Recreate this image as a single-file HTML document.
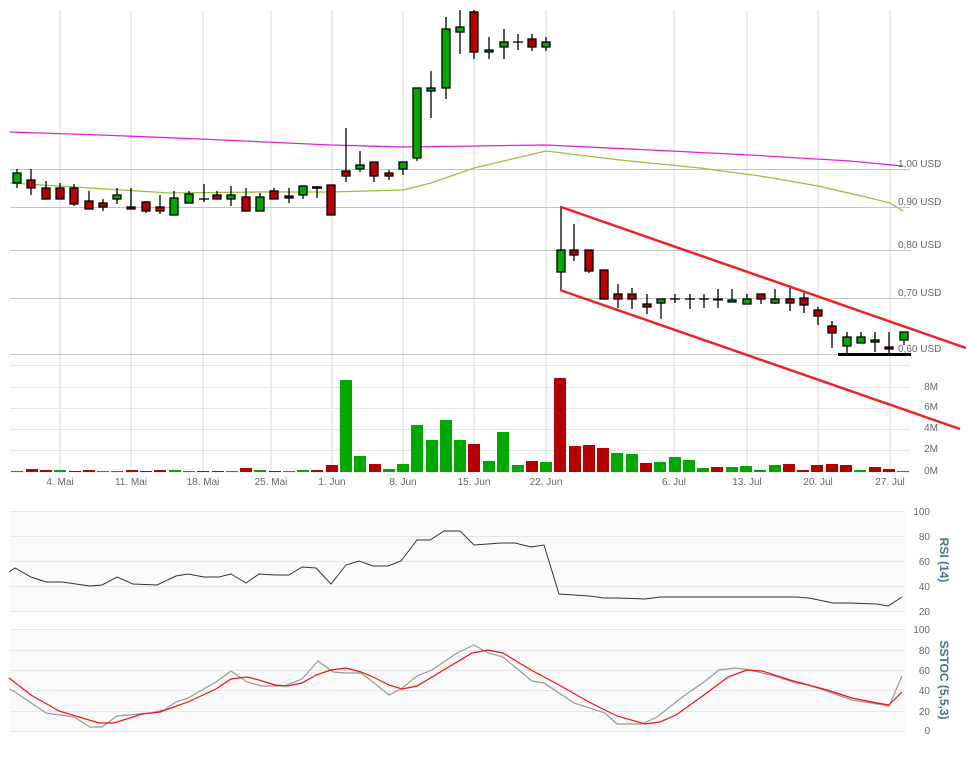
<!DOCTYPE html>
<html><head><meta charset="utf-8"><style>
html,body{margin:0;padding:0;background:#fff}
svg{display:block}
text{font-family:"Liberation Sans",sans-serif;font-size:10px;fill:#666}
</style></head><body>
<svg width="968" height="765" viewBox="0 0 968 765" xmlns="http://www.w3.org/2000/svg">
<!-- vertical grid -->
<g stroke="#ececec" stroke-width="2">
<line x1="60" y1="10" x2="60" y2="472"/><line x1="131" y1="10" x2="131" y2="472"/><line x1="203" y1="10" x2="203" y2="472"/><line x1="271" y1="10" x2="271" y2="472"/><line x1="332" y1="10" x2="332" y2="472"/><line x1="403" y1="10" x2="403" y2="472"/><line x1="474" y1="10" x2="474" y2="472"/><line x1="546" y1="10" x2="546" y2="472"/><line x1="674" y1="10" x2="674" y2="472"/><line x1="747" y1="10" x2="747" y2="472"/><line x1="818" y1="10" x2="818" y2="472"/><line x1="890" y1="10" x2="890" y2="472"/>
</g>
<!-- price grid -->
<g stroke="#c4c4c4" stroke-width="1">
<line x1="10" y1="169.5" x2="910" y2="169.5"/><line x1="10" y1="207.5" x2="910" y2="207.5"/><line x1="10" y1="250.5" x2="910" y2="250.5"/><line x1="10" y1="298.5" x2="910" y2="298.5"/><line x1="10" y1="354.5" x2="910" y2="354.5"/>
</g>
<!-- volume grid -->
<g stroke="#e4e4e4" stroke-width="1">
<line x1="10" y1="365.5" x2="910" y2="365.5"/><line x1="10" y1="387.5" x2="910" y2="387.5"/><line x1="10" y1="408.5" x2="910" y2="408.5"/><line x1="10" y1="429.5" x2="910" y2="429.5"/><line x1="10" y1="450.5" x2="910" y2="450.5"/><line x1="10" y1="472" x2="910" y2="472"/>
</g>
<!-- MAs -->
<polyline fill="none" stroke="#dd22dd" stroke-width="1.3" points="10,132 100,135 200,139 331,145 403,147 546,145 650,150 750,155 850,161 903,166"/>
<polyline fill="none" stroke="#99c040" stroke-width="1.3" points="10,183 90,188 170,193 260,192 331,192 403,190 431,183 474,168 546,151 620,160 700,168 760,176 818,186 870,198 890,203 903,211"/>
<!-- candles -->
<g stroke="#000" stroke-width="1.3">
<line x1="17" y1="169" x2="17" y2="188"/><line x1="31" y1="169" x2="31" y2="195"/><line x1="46" y1="181" x2="46" y2="199"/><line x1="60" y1="183" x2="60" y2="199"/><line x1="74" y1="184" x2="74" y2="206"/><line x1="89" y1="191" x2="89" y2="209"/><line x1="103" y1="199" x2="103" y2="211"/><line x1="117" y1="188" x2="117" y2="204"/><line x1="131" y1="188" x2="131" y2="209"/><line x1="146" y1="201" x2="146" y2="213"/><line x1="160" y1="195" x2="160" y2="214"/><line x1="174" y1="191" x2="174" y2="215"/><line x1="189" y1="191" x2="189" y2="203"/><line x1="204" y1="184" x2="204" y2="202"/><line x1="217" y1="191" x2="217" y2="199"/><line x1="231" y1="186" x2="231" y2="206"/><line x1="246" y1="188" x2="246" y2="211"/><line x1="260" y1="193" x2="260" y2="211"/><line x1="274" y1="188" x2="274" y2="199"/><line x1="289" y1="188" x2="289" y2="203"/><line x1="303" y1="186" x2="303" y2="199"/><line x1="317" y1="186" x2="317" y2="198"/><line x1="346" y1="128" x2="346" y2="182"/><line x1="360" y1="151" x2="360" y2="172"/><line x1="374" y1="162" x2="374" y2="182"/><line x1="389" y1="170" x2="389" y2="180"/><line x1="403" y1="162" x2="403" y2="175"/><line x1="417" y1="88" x2="417" y2="161"/><line x1="431" y1="71" x2="431" y2="118"/><line x1="446" y1="17" x2="446" y2="99"/><line x1="460" y1="10" x2="460" y2="54"/><line x1="474" y1="10" x2="474" y2="59"/><line x1="489" y1="37" x2="489" y2="59"/><line x1="504" y1="29" x2="504" y2="59"/><line x1="518" y1="34" x2="518" y2="50"/><line x1="532" y1="34" x2="532" y2="51"/><line x1="546" y1="37" x2="546" y2="51"/>
<line x1="561" y1="206" x2="561" y2="290"/><line x1="574" y1="224" x2="574" y2="261"/><line x1="589" y1="250" x2="589" y2="273"/><line x1="618" y1="284" x2="618" y2="308"/><line x1="632" y1="288" x2="632" y2="309"/><line x1="647" y1="294" x2="647" y2="314"/><line x1="661" y1="299" x2="661" y2="319"/><line x1="675" y1="294" x2="675" y2="303"/><line x1="690" y1="294" x2="690" y2="309"/><line x1="704" y1="294" x2="704" y2="308"/><line x1="718" y1="289" x2="718" y2="308"/><line x1="732" y1="289" x2="732" y2="302"/><line x1="747" y1="294" x2="747" y2="304"/><line x1="761" y1="294" x2="761" y2="304"/><line x1="775" y1="289" x2="775" y2="304"/><line x1="790" y1="288" x2="790" y2="311"/><line x1="804" y1="293" x2="804" y2="313"/><line x1="818" y1="307" x2="818" y2="325"/><line x1="832" y1="321" x2="832" y2="348"/><line x1="847" y1="332" x2="847" y2="353"/><line x1="861" y1="332" x2="861" y2="343"/><line x1="875" y1="332" x2="875" y2="352"/><line x1="889" y1="332" x2="889" y2="353"/><line x1="904" y1="332" x2="904" y2="345"/>
<!-- dojis -->
<line x1="199" y1="199" x2="209" y2="199"/><line x1="312" y1="187.5" x2="322" y2="187.5" stroke-width="2.5"/><line x1="513" y1="42" x2="523" y2="42"/><line x1="670" y1="299" x2="680" y2="299"/><line x1="685" y1="299" x2="695" y2="299"/><line x1="699" y1="299" x2="709" y2="299"/><line x1="713" y1="299.5" x2="723" y2="299.5" stroke-width="2"/>
</g>
<g stroke="#000" stroke-width="1.3" fill="#b50000">
<rect x="27" y="180" width="8" height="8"/><rect x="42" y="188" width="8" height="11"/><rect x="56" y="188" width="8" height="11"/><rect x="70" y="188" width="8" height="16"/><rect x="85" y="201" width="8" height="8"/><rect x="99" y="203" width="8" height="4"/><rect x="127" y="207" width="8" height="2"/><rect x="142" y="202" width="8" height="9"/><rect x="156" y="207" width="8" height="4"/><rect x="213" y="195" width="8" height="4"/><rect x="242" y="197" width="8" height="14"/><rect x="270" y="191" width="8" height="8"/><rect x="285" y="196" width="8" height="2"/><rect x="327" y="185" width="8" height="30"/><rect x="342" y="171" width="8" height="5"/><rect x="370" y="162" width="8" height="14"/><rect x="385" y="173" width="8" height="3"/><rect x="470" y="12" width="8" height="40"/><rect x="528" y="39" width="8" height="8"/>
<rect x="570" y="250" width="8" height="5"/><rect x="585" y="250" width="8" height="21"/><rect x="600" y="270" width="8" height="29"/><rect x="614" y="294" width="8" height="5"/><rect x="628" y="294" width="8" height="5"/><rect x="643" y="304" width="8" height="3"/><rect x="757" y="294" width="8" height="5"/><rect x="786" y="299" width="8" height="4"/><rect x="800" y="298" width="8" height="7"/><rect x="814" y="310" width="8" height="6"/><rect x="828" y="326" width="8" height="7"/><rect x="885" y="347" width="8" height="2"/>
</g>
<g stroke="#000" stroke-width="1.3" fill="#00a800">
<rect x="13" y="173" width="8" height="10"/><rect x="113" y="195" width="8" height="4"/><rect x="170" y="198" width="8" height="17"/><rect x="185" y="194" width="8" height="9"/><rect x="227" y="195" width="8" height="4"/><rect x="256" y="197" width="8" height="14"/><rect x="299" y="186" width="8" height="9"/><rect x="356" y="165" width="8" height="4"/><rect x="399" y="162" width="8" height="7"/><rect x="413" y="88" width="8" height="70"/><rect x="427" y="88" width="8" height="3"/><rect x="442" y="29" width="8" height="59"/><rect x="456" y="27" width="8" height="5"/><rect x="485" y="50" width="8" height="2"/><rect x="500" y="42" width="8" height="5"/><rect x="542" y="42" width="8" height="5"/>
<rect x="557" y="250" width="8" height="22"/><rect x="657" y="299" width="8" height="4"/><rect x="728" y="300" width="8" height="2"/><rect x="743" y="299" width="8" height="5"/><rect x="771" y="299" width="8" height="4"/><rect x="843" y="337" width="8" height="9"/><rect x="857" y="337" width="8" height="6"/><rect x="871" y="340" width="8" height="2"/><rect x="900" y="332" width="8" height="8"/>
</g>
<!-- support & channel -->
<line x1="838" y1="354.5" x2="911" y2="354.5" stroke="#000" stroke-width="3"/>
<line x1="561" y1="207" x2="966" y2="348" stroke="#ee2222" stroke-width="2.5"/>
<line x1="560" y1="290" x2="960" y2="429" stroke="#ee2222" stroke-width="2.5"/>
<!-- price labels -->
<text x="898" y="167">1,00 USD</text><text x="898" y="205">0,90 USD</text><text x="898" y="248">0,80 USD</text><text x="898" y="296">0,70 USD</text><text x="898" y="352">0,60 USD</text>
<!-- volume labels -->
<g text-anchor="end"><text x="938" y="390">8M</text><text x="938" y="410">6M</text><text x="938" y="431">4M</text><text x="938" y="452">2M</text><text x="938" y="474">0M</text></g>
<!-- volume bars -->
<g fill="#00a800">
<rect x="11" y="471" width="12" height="1"/><rect x="54" y="470" width="12" height="2"/><rect x="97" y="471" width="12" height="1"/><rect x="111" y="471" width="12" height="1"/><rect x="169" y="470" width="12" height="2"/><rect x="183" y="471" width="12" height="1"/><rect x="226" y="471" width="12" height="1"/><rect x="254" y="470" width="12" height="2"/><rect x="283" y="471" width="12" height="1"/><rect x="297" y="470" width="12" height="2"/><rect x="340" y="380" width="12" height="92"/><rect x="354" y="456" width="12" height="16"/><rect x="383" y="469" width="12" height="3"/><rect x="397" y="464" width="12" height="8"/><rect x="411" y="425" width="12" height="47"/><rect x="426" y="440" width="12" height="32"/><rect x="440" y="420" width="12" height="52"/><rect x="454" y="440" width="12" height="32"/><rect x="483" y="461" width="12" height="11"/><rect x="497" y="432" width="12" height="40"/><rect x="512" y="465" width="12" height="7"/><rect x="540" y="462" width="12" height="10"/>
<rect x="611" y="453" width="12" height="19"/><rect x="626" y="454" width="12" height="18"/><rect x="654" y="462" width="12" height="10"/><rect x="669" y="457" width="12" height="15"/><rect x="683" y="460" width="12" height="12"/><rect x="697" y="468" width="12" height="4"/><rect x="726" y="467" width="12" height="5"/><rect x="740" y="466" width="12" height="6"/><rect x="754" y="470" width="12" height="2"/><rect x="769" y="465" width="12" height="7"/><rect x="854" y="470" width="12" height="2"/><rect x="897" y="471" width="12" height="1"/>
</g>
<g fill="#b50000">
<rect x="26" y="469" width="12" height="3"/><rect x="40" y="470" width="12" height="2"/><rect x="69" y="471" width="12" height="1"/><rect x="83" y="470" width="12" height="2"/><rect x="126" y="470" width="12" height="2"/><rect x="140" y="471" width="12" height="1"/><rect x="154" y="470" width="12" height="2"/><rect x="197" y="471" width="12" height="1"/><rect x="212" y="471" width="12" height="1"/><rect x="240" y="468" width="12" height="4"/><rect x="269" y="471" width="12" height="1"/><rect x="311" y="470" width="12" height="2"/><rect x="326" y="465" width="12" height="7"/><rect x="369" y="464" width="12" height="8"/><rect x="468" y="444" width="12" height="28"/><rect x="526" y="461" width="12" height="11"/>
<rect x="554" y="378" width="12" height="94"/><rect x="569" y="446" width="12" height="26"/><rect x="583" y="445" width="12" height="27"/><rect x="597" y="448" width="12" height="24"/><rect x="640" y="463" width="12" height="9"/><rect x="711" y="467" width="12" height="5"/><rect x="783" y="464" width="12" height="8"/><rect x="797" y="470" width="12" height="2"/><rect x="811" y="465" width="12" height="7"/><rect x="826" y="464" width="12" height="8"/><rect x="840" y="465" width="12" height="7"/><rect x="869" y="467" width="12" height="5"/><rect x="883" y="469" width="12" height="3"/>
</g>
<!-- x labels -->
<g text-anchor="middle">
<text x="60" y="485">4. Mai</text><text x="131" y="485">11. Mai</text><text x="203" y="485">18. Mai</text><text x="271" y="485">25. Mai</text><text x="332" y="485">1. Jun</text><text x="403" y="485">8. Jun</text><text x="474" y="485">15. Jun</text><text x="546" y="485">22. Jun</text><text x="674" y="485">6. Jul</text><text x="747" y="485">13. Jul</text><text x="818" y="485">20. Jul</text><text x="890" y="485">27. Jul</text>
</g>
<!-- RSI panel -->
<rect x="10" y="511" width="895" height="100" fill="#fafafa"/>
<g stroke="#e6e6e6" stroke-width="1">
<line x1="10" y1="511.5" x2="905" y2="511.5"/><line x1="10" y1="536.5" x2="905" y2="536.5"/><line x1="10" y1="561.5" x2="905" y2="561.5"/><line x1="10" y1="586.5" x2="905" y2="586.5"/><line x1="10" y1="611.5" x2="905" y2="611.5"/>
</g>
<g text-anchor="end" style="font-size:11px"><text x="930" y="515">100</text><text x="930" y="540">80</text><text x="930" y="565">60</text><text x="930" y="590">40</text><text x="930" y="615">20</text></g>
<text transform="translate(940,560) rotate(90)" text-anchor="middle" style="font-size:12px;font-weight:bold;fill:#4a6f96">RSI (14)</text>
<polyline fill="none" stroke="#333" stroke-width="1" points="9,572 15,568 31,577 46,582 62,582 90,586 102,585 117,577 133,584 157,585 176,576 188,574 204,577 219,577 231,574 246,583 259,574 275,575 289,575 302,567 316,568 331,584 346,565 359,561 373,566 388,566 401,561 417,540 430,540 444,531 460,531 474,545 488,544 501,543 515,543 531,547 544,545 559,594 574,595 589,596 604,598 617,598 645,599 660,597 796,597 809,598 833,603 849,603 877,604 888,606 902,597"/>
<!-- Stoch panel -->
<rect x="10" y="629" width="895" height="102" fill="#fafafa"/>
<g stroke="#e6e6e6" stroke-width="1">
<line x1="10" y1="629.5" x2="905" y2="629.5"/><line x1="10" y1="650.5" x2="905" y2="650.5"/><line x1="10" y1="670.5" x2="905" y2="670.5"/><line x1="10" y1="690.5" x2="905" y2="690.5"/><line x1="10" y1="711.5" x2="905" y2="711.5"/><line x1="10" y1="731.5" x2="905" y2="731.5"/>
</g>
<g text-anchor="end" style="font-size:11px"><text x="930" y="633">100</text><text x="930" y="654">80</text><text x="930" y="674">60</text><text x="930" y="694">40</text><text x="930" y="715">20</text><text x="930" y="734">0</text></g>
<text transform="translate(940,680) rotate(90)" text-anchor="middle" style="font-size:12px;font-weight:bold;fill:#4a6f96">SSTOC (5,5,3)</text>
<polyline fill="none" stroke="#999" stroke-width="1.2" points="9,689 15,692 46,713 74,717 90,727 102,727 117,716 151,713 164,710 176,702 188,698 216,682 231,671 247,682 262,686 284,686 302,679 318,661 333,672 346,673 361,673 373,682 389,695 401,689 417,676 432,670 457,653 474,645 488,653 503,657 532,681 544,683 559,693 574,703 605,713 617,724 642,724 657,717 685,695 704,682 719,670 735,668 750,670 778,677 796,683 809,685 852,700 877,704 889,706 902,676"/>
<polyline fill="none" stroke="#ee1111" stroke-width="1.2" points="9,678 31,695 59,711 99,723 114,723 142,714 160,712 188,702 216,689 231,679 247,677 259,680 275,685 287,686 302,683 316,675 331,670 346,668 361,672 373,677 389,685 402,689 417,686 432,677 472,653 488,650 503,653 531,670 559,685 589,702 617,716 645,724 660,722 676,715 704,695 728,677 747,670 762,671 790,680 827,690 852,698 877,703 889,705 902,692"/>
</svg>
</body></html>
